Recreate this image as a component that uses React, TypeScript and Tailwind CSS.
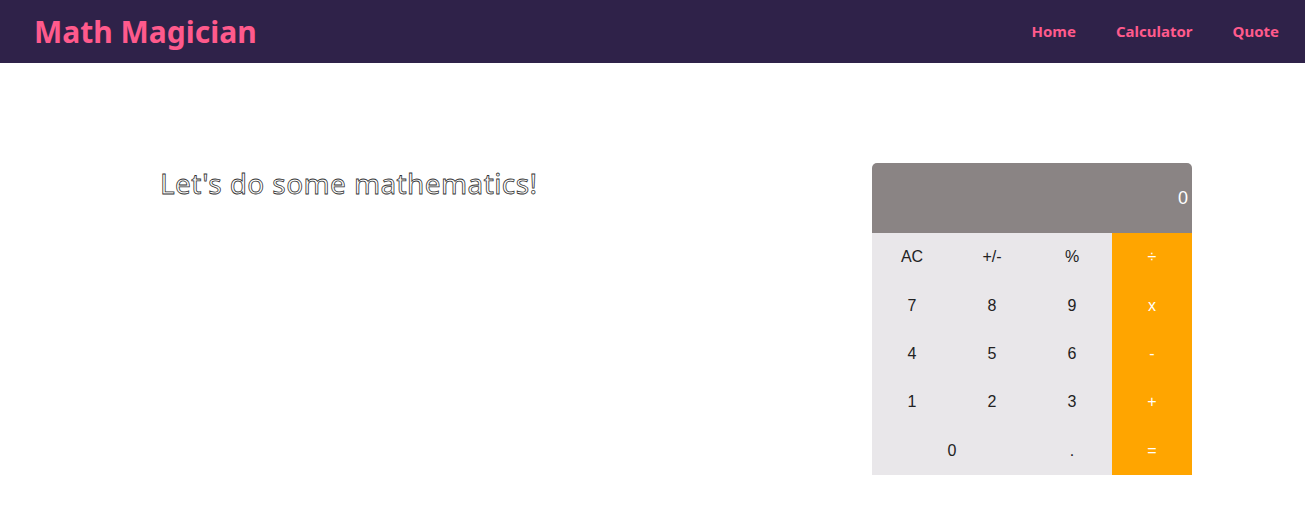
import React from 'react';

const keys: { label: string; op?: boolean; wide?: boolean }[] = [
  { label: 'AC' }, { label: '+/-' }, { label: '%' }, { label: '÷', op: true },
  { label: '7' }, { label: '8' }, { label: '9' }, { label: 'x', op: true },
  { label: '4' }, { label: '5' }, { label: '6' }, { label: '-', op: true },
  { label: '1' }, { label: '2' }, { label: '3' }, { label: '+', op: true },
  { label: '0', wide: true }, { label: '.' }, { label: '=', op: true },
];

const Calculator: React.FC = () => (
  <div className="w-[320px] rounded-t-[5px] overflow-hidden">
    <div className="h-[70px] bg-[#8a8484] flex items-center justify-end pr-[4px] text-white text-[18px] font-['Liberation_Sans',sans-serif]">
      0
    </div>
    <div className="grid grid-cols-4">
      {keys.map((k) => (
        <button
          key={k.label}
          className={`h-[48.4px] flex items-center justify-center text-[16px] font-['Liberation_Sans',sans-serif] ${
            k.op ? 'bg-[#ffa500] text-white' : 'bg-[#e9e7ea] text-[#222]'
          } ${k.wide ? 'col-span-2' : ''}`}
        >
          {k.label}
        </button>
      ))}
    </div>
  </div>
);

export default function App() {
  return (
    <div className="min-h-screen bg-white font-['Open_Sans',sans-serif]">
      <nav className="h-[63px] bg-[#2f2249] flex items-center justify-between pl-[34px] pr-[26px]">
        <h1 className="text-[#ff5a8c] text-[30px] font-bold font-['Noto_Sans',sans-serif] leading-none">Math Magician</h1>
        <ul className="flex items-center gap-[40px] text-[#ff5a8c] text-[15px] font-bold font-['Noto_Sans',sans-serif]">
          <li>Home</li>
          <li>Calculator</li>
          <li>Quote</li>
        </ul>
      </nav>
      <main className="flex justify-between pt-[100px] pl-[160px] pr-[113px]">
        <h2 className="text-[28px] tracking-[0.4px] leading-[44px] -mt-[2px] text-white font-['Noto_Sans',sans-serif] [-webkit-text-stroke:0.8px_#333]">
          Let's do some mathematics!
        </h2>
        <Calculator />
      </main>
    </div>
  );
}
